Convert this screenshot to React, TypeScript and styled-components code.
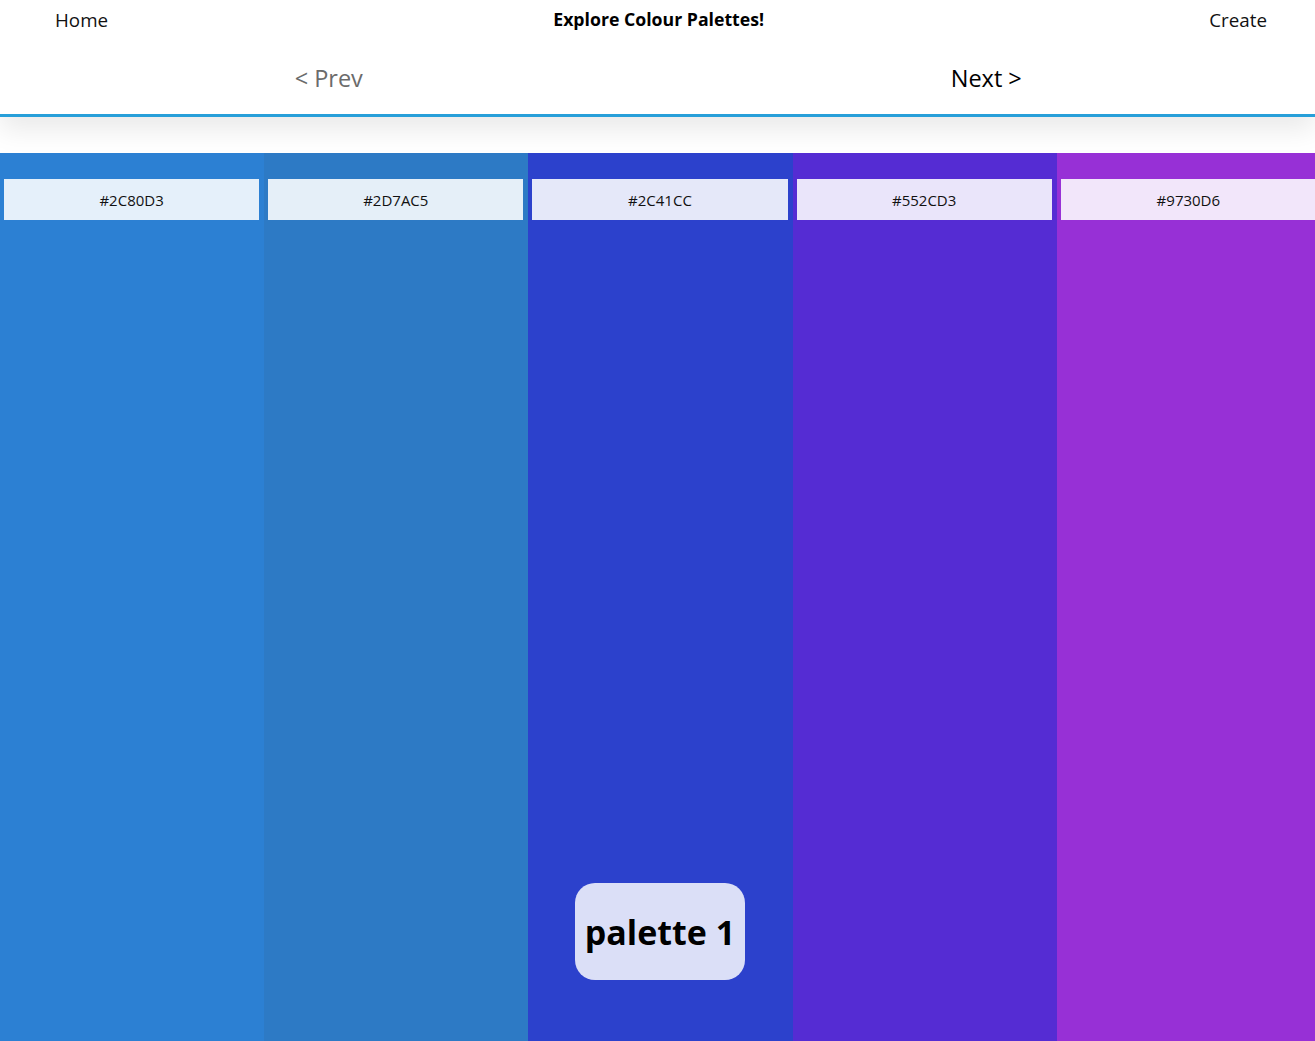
import React from "react";
import styled, { createGlobalStyle } from "styled-components";

const GlobalStyle = createGlobalStyle`
  html, body {
    margin: 0;
    padding: 0;
    background: #ffffff;
    font-family: "Open Sans", "Noto Sans", sans-serif;
    overflow: hidden;
  }
`;

const Page = styled.div`
  width: 1315px;
  height: 1041px;
  display: flex;
  flex-direction: column;
  overflow: hidden;
  position: relative;
`;

const Header = styled.header`
  display: flex;
  flex-direction: column;
  border-bottom: 3px solid #279fd9;
  box-shadow: 0 12px 26px rgba(0, 0, 0, 0.09);
  background: #ffffff;
  position: relative;
  z-index: 1;
`;

const TopRow = styled.div`
  display: flex;
  align-items: center;
  justify-content: space-between;
  height: 40px;
  padding: 0 48px 0 55px;
`;

const NavLink = styled.span`
  font-size: 18.8px;
  color: #111;
`;

const Title = styled.h1`
  margin: 0;
  font-size: 17.7px;
  font-weight: 700;
  color: #000;
  transform: translateY(-1px);
`;

const PagerRow = styled.div`
  display: grid;
  grid-template-columns: 1fr 1fr;
  height: 74px;
  align-items: center;
`;

const PagerButton = styled.span<{ $muted?: boolean }>`
  justify-self: center;
  font-size: 23.5px;
  color: ${(p) => (p.$muted ? "#6b6b6b" : "#000")};
  transform: translateY(1px);
`;

const Spacer = styled.div`
  height: 36px;
  flex: none;
`;

const Columns = styled.div`
  display: grid;
  grid-template-columns: repeat(5, 264.2px);
  flex: 1;
`;

const Column = styled.div<{ $bg: string }>`
  background: ${(p) => p.$bg};
  padding: 26px 5px 0 4px;
`;

const HexLabel = styled.div`
  height: 41px;
  display: flex;
  align-items: center;
  justify-content: center;
  background: rgba(255, 255, 255, 0.88);
  font-size: 15px;
  color: #111;
`;

const Badge = styled.div`
  position: absolute;
  left: 575px;
  top: 883px;
  width: 170px;
  height: 97px;
  border-radius: 20px;
  background: rgba(255, 255, 255, 0.83);
  display: flex;
  align-items: center;
  justify-content: center;
  font-size: 34px;
  font-weight: 700;
  color: #000;
`;

const colours = ["#2C80D3", "#2D7AC5", "#2C41CC", "#552CD3", "#9730D6"];

export default function App() {
  return (
    <Page>
      <GlobalStyle />
      <Header>
        <TopRow>
          <NavLink>Home</NavLink>
          <Title>Explore Colour Palettes!</Title>
          <NavLink>Create</NavLink>
        </TopRow>
        <PagerRow>
          <PagerButton $muted>&lt; Prev</PagerButton>
          <PagerButton>Next &gt;</PagerButton>
        </PagerRow>
      </Header>
      <Spacer />
      <Columns>
        {colours.map((c) => (
          <Column key={c} $bg={c}>
            <HexLabel>{c}</HexLabel>
          </Column>
        ))}
      </Columns>
      <Badge>palette 1</Badge>
    </Page>
  );
}
